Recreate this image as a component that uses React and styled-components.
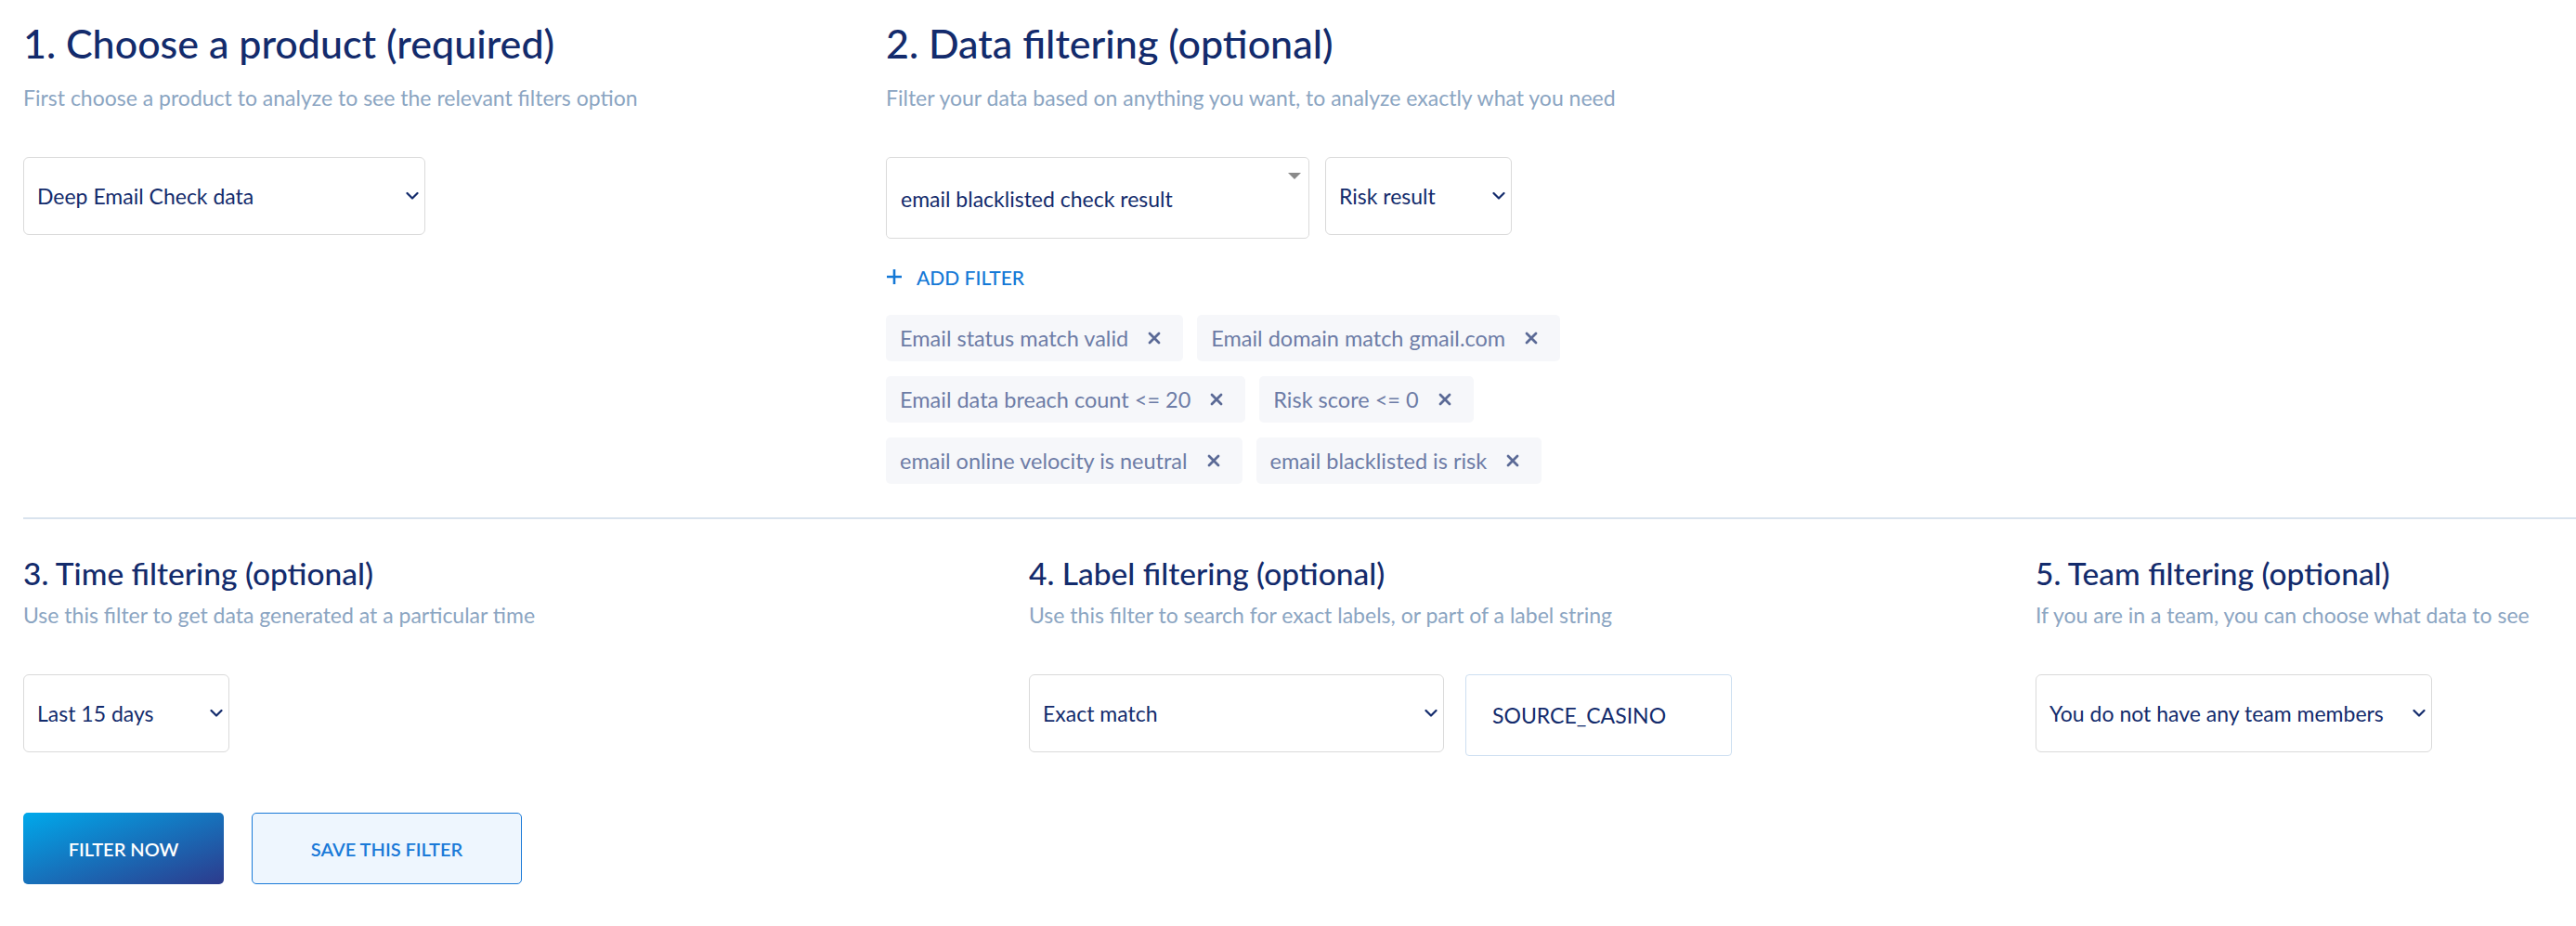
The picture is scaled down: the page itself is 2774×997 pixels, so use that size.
import React from "react";
import styled, { createGlobalStyle } from "styled-components";

const GlobalStyle = createGlobalStyle`
  body {
    margin: 0;
    background: #ffffff;
    font-family: "Lato", "Open Sans", sans-serif;
  }
  * { box-sizing: border-box; }
`;

const navy = "#132b6c";

const Page = styled.div`
  width: 2774px;
  padding: 21px 0 40px 25px;
`;

const TopRow = styled.div`
  display: flex;
`;

const Section = styled.section`
  flex: ${(p) => (p.$w ? `0 0 ${p.$w}px` : "1 1 auto")};
  display: flex;
  flex-direction: column;
  align-items: flex-start;
`;

const Heading = styled.h2`
  margin: 0;
  font-size: ${(p) => p.$size}px;
  font-weight: 500;
  line-height: 1.2;
  color: ${navy};
  white-space: nowrap;
`;

const Subtitle = styled.p`
  margin: ${(p) => p.$gap}px 0 0;
  font-size: 23px;
  line-height: 1.25;
  color: #8ba5c2;
  white-space: nowrap;
`;

const Controls = styled.div`
  display: flex;
  align-items: flex-start;
  gap: ${(p) => p.$gap || 17}px;
  margin-top: 50px;
`;

const SelectWrap = styled.div`
  position: relative;
  width: ${(p) => p.$w}px;
  height: 84px;
`;

const NativeSelect = styled.select`
  appearance: none;
  width: 100%;
  height: 100%;
  padding: 0 34px 0 14px;
  border: 1px solid #dadada;
  border-radius: 6px;
  background: #ffffff;
  font-family: inherit;
  font-size: 23px;
  color: ${navy};
  outline: none;
`;

const Chevron = styled.svg`
  position: absolute;
  right: 7px;
  top: 50%;
  transform: translateY(-50%);
  pointer-events: none;
`;

const Combo = styled.div`
  position: relative;
  display: flex;
  align-items: center;
  width: 456px;
  height: 88px;
  padding: 2px 40px 0 15px;
  border: 1px solid #dadada;
  border-radius: 5px;
  font-size: 23px;
  color: ${navy};
`;

const Caret = styled.span`
  position: absolute;
  top: 16px;
  right: 8px;
  border-left: 7px solid transparent;
  border-right: 7px solid transparent;
  border-top: 7px solid #8a8a8a;
`;

const AddFilter = styled.button`
  display: flex;
  align-items: center;
  gap: 15px;
  height: 26px;
  margin-top: 28px;
  padding: 0;
  border: none;
  background: none;
  font-family: inherit;
  font-size: 21px;
  font-weight: 500;
  color: #1478d6;
  cursor: pointer;
`;

const ChipList = styled.div`
  display: flex;
  flex-direction: column;
  gap: 16px;
  margin-top: 28px;
`;

const ChipRow = styled.div`
  display: flex;
  gap: 15px;
`;

const Chip = styled.span`
  display: inline-flex;
  align-items: center;
  gap: 21px;
  height: 50px;
  padding: 0 24px 0 15px;
  border-radius: 5px;
  background: #f6f7fa;
  font-size: 23.5px;
  color: #6d7ca6;
  white-space: nowrap;
`;

const Divider = styled.hr`
  margin: 36px 0 0;
  border: none;
  border-top: 2px solid #d9e3ee;
`;

const BottomGrid = styled.div`
  display: grid;
  grid-template-columns: 1083px 1084px 1fr;
  margin-top: 38px;
`;

const TextInput = styled.input`
  width: 287px;
  height: 88px;
  padding: 0 28px;
  border: 1px solid #cddff1;
  border-radius: 4px;
  font-family: inherit;
  font-size: 23px;
  color: ${navy};
  outline: none;
`;

const ButtonRow = styled.div`
  display: flex;
  gap: 30px;
  margin-top: 61px;
`;

const Button = styled.button`
  height: 77px;
  width: ${(p) => p.$w}px;
  border-radius: 5px;
  font-family: inherit;
  font-size: 20px;
  font-weight: 600;
  cursor: pointer;
`;

const PrimaryButton = styled(Button)`
  border: none;
  color: #ffffff;
  background: linear-gradient(to bottom right, #00a9eb, #2d3a8c);
`;

const OutlineButton = styled(Button)`
  border: 1.5px solid #1a7ad8;
  color: #1a7ad8;
  background: #eef6fe;
`;

const ChevronIcon = () => (
  <Chevron width="14" height="9" viewBox="0 0 14 9">
    <polyline points="1.5,1.5 7,7 12.5,1.5" fill="none" stroke={navy} strokeWidth="2.2" strokeLinecap="round" strokeLinejoin="round" />
  </Chevron>
);

const CloseIcon = () => (
  <svg width="14" height="14" viewBox="0 0 14 14">
    <path d="M2 2 L12 12 M12 2 L2 12" stroke="#5b6a96" strokeWidth="2.8" strokeLinecap="round" />
  </svg>
);

const PlusIcon = () => (
  <svg width="18" height="18" viewBox="0 0 18 18">
    <path d="M9 1 V17 M1 9 H17" stroke="#1478d6" strokeWidth="2.6" />
  </svg>
);

const Select = ({ width, value }) => (
  <SelectWrap $w={width}>
    <NativeSelect defaultValue={value}>
      <option>{value}</option>
    </NativeSelect>
    <ChevronIcon />
  </SelectWrap>
);

const chipRows = [
  ["Email status match valid", "Email domain match gmail.com"],
  ["Email data breach count <= 20", "Risk score <= 0"],
  ["email online velocity is neutral", "email blacklisted is risk"],
];

export default function App() {
  return (
    <Page>
      <GlobalStyle />
      <TopRow>
        <Section $w={929}>
          <Heading $size={43}>1. Choose a product (required)</Heading>
          <Subtitle $gap={18}>First choose a product to analyze to see the relevant filters option</Subtitle>
          <Controls>
            <Select width={433} value="Deep Email Check data" />
          </Controls>
        </Section>
        <Section>
          <Heading $size={43}>2. Data filtering (optional)</Heading>
          <Subtitle $gap={18}>Filter your data based on anything you want, to analyze exactly what you need</Subtitle>
          <Controls>
            <Combo role="combobox">
              email blacklisted check result
              <Caret />
            </Combo>
            <Select width={201} value="Risk result" />
          </Controls>
          <AddFilter>
            <PlusIcon />
            ADD FILTER
          </AddFilter>
          <ChipList>
            {chipRows.map((row, i) => (
              <ChipRow key={i}>
                {row.map((label) => (
                  <Chip key={label}>
                    {label}
                    <CloseIcon />
                  </Chip>
                ))}
              </ChipRow>
            ))}
          </ChipList>
        </Section>
      </TopRow>

      <Divider />

      <BottomGrid>
        <Section>
          <Heading $size={33.5}>3. Time filtering (optional)</Heading>
          <Subtitle $gap={10}>Use this filter to get data generated at a particular time</Subtitle>
          <Controls>
            <Select width={222} value="Last 15 days" />
          </Controls>
        </Section>
        <Section>
          <Heading $size={33.5}>4. Label filtering (optional)</Heading>
          <Subtitle $gap={10}>Use this filter to search for exact labels, or part of a label string</Subtitle>
          <Controls $gap={23}>
            <Select width={447} value="Exact match" />
            <TextInput defaultValue="SOURCE_CASINO" />
          </Controls>
        </Section>
        <Section>
          <Heading $size={33.5}>5. Team filtering (optional)</Heading>
          <Subtitle $gap={10}>If you are in a team, you can choose what data to see</Subtitle>
          <Controls>
            <Select width={427} value="You do not have any team members" />
          </Controls>
        </Section>
      </BottomGrid>

      <ButtonRow>
        <PrimaryButton $w={216}>FILTER NOW</PrimaryButton>
        <OutlineButton $w={291}>SAVE THIS FILTER</OutlineButton>
      </ButtonRow>
    </Page>
  );
}
